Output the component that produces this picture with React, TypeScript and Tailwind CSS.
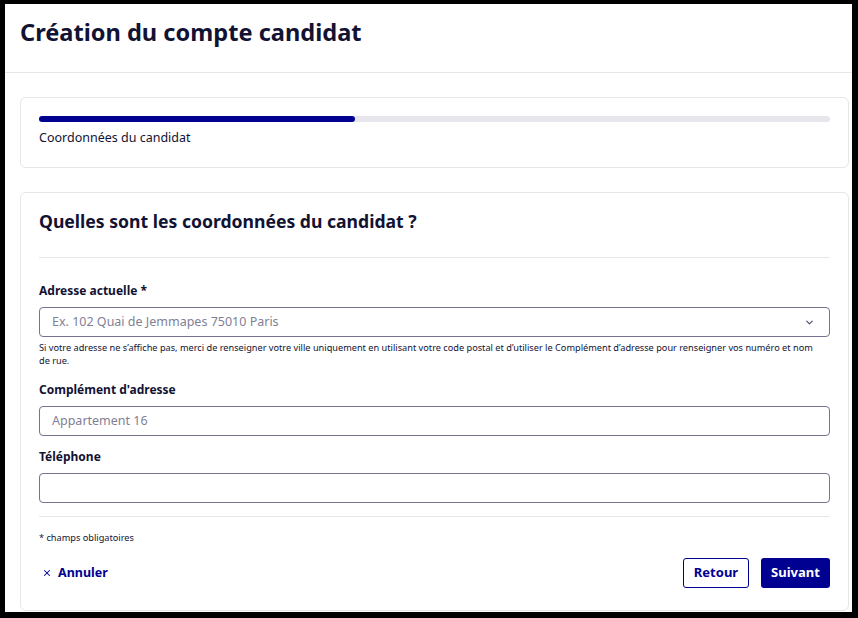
import React from 'react';
import { ChevronDown, X } from 'lucide-react';

const font = { fontFamily: '"Noto Sans", "Liberation Sans", sans-serif' };

function Field({ label, placeholder, select }: { label: string; placeholder?: string; select?: boolean }) {
  return (
    <div>
      <label className="block text-[12px] font-bold leading-[18px] text-[#121233]">{label}</label>
      <div className="mt-[7px] flex h-[30px] items-center rounded-[4px] border border-[#74748f] pl-[12px] pr-[14px]">
        <span className="flex-1 text-[12.5px] text-[#7f7f96]">{placeholder}</span>
        {select && <ChevronDown className="h-[11px] w-[11px] text-[#4a4a66]" strokeWidth={2.5} />}
      </div>
    </div>
  );
}

export default function App() {
  return (
    <div
      className="flex h-[618px] w-[858px] flex-col overflow-hidden border-b-[6px] border-l-[5px] border-r-[6px] border-t-4 border-black bg-white"
      style={font}
    >
      {/* Header */}
      <div className="flex h-[69px] shrink-0 items-center border-b border-[#e6e6e6] pl-[15px]">
        <h1 className="-mt-[11px] text-[23.6px] font-bold text-[#121233]">Création du compte candidat</h1>
      </div>

      <div className="flex flex-col gap-[24px] pl-[15px] pr-[3px] pt-[24px]">
        {/* Progress card */}
        <div className="rounded-[6px] border border-[#e6e6e6] px-[18px] pb-[20px] pt-[18px]">
          <div className="h-[6px] w-full rounded-full bg-[#e6e6ec]">
            <div className="h-[6px] w-[40%] rounded-full bg-[#000091]" />
          </div>
          <p className="mt-[7px] text-[12.5px] leading-[18px] text-[#121233]">Coordonnées du candidat</p>
        </div>

        {/* Form card */}
        <div className="rounded-[6px] border border-[#e6e6e6] px-[18px] pb-[22px] pt-[14px]">
          <h2 className="text-[17.6px] font-bold leading-[28px] text-[#121233]">Quelles sont les coordonnées du candidat ?</h2>
          <div className="mt-[22px] border-t border-[#e6e6e6]" />

          <div className="mt-[24px]">
            <Field label="Adresse actuelle *" placeholder="Ex. 102 Quai de Jemmapes 75010 Paris" select />
            <p className="mt-[4px] pr-[10px] text-[9.2px] leading-[13px] text-[#121233]">
              Si votre adresse ne s’affiche pas, merci de renseigner votre ville uniquement en utilisant votre code postal et d’utiliser le Complément d’adresse pour renseigner vos numéro et nom de rue.
            </p>
          </div>

          <div className="mt-[14px]">
            <Field label="Complément d'adresse" placeholder="Appartement 16" />
          </div>

          <div className="mt-[12px]">
            <Field label="Téléphone" />
          </div>

          <div className="mt-[13px] border-t border-[#e6e6e6]" />

          <p className="mt-[14px] text-[9.2px] leading-[13px] text-[#121233]">* champs obligatoires</p>

          <div className="mt-[14px] flex items-center">
            <button className="flex items-center gap-[6px] pl-[3px] text-[12.5px] font-bold text-[#000091]">
              <X className="h-[10px] w-[10px]" strokeWidth={2.5} />
              Annuler
            </button>
            <div className="ml-auto flex gap-[12px]">
              <button className="h-[30px] w-[66px] rounded-[3px] border border-[#000091] text-[13px] font-bold text-[#000091]">
                Retour
              </button>
              <button className="h-[30px] w-[69px] rounded-[3px] bg-[#000091] text-[13px] font-bold text-white">
                Suivant
              </button>
            </div>
          </div>
        </div>
      </div>
    </div>
  );
}
